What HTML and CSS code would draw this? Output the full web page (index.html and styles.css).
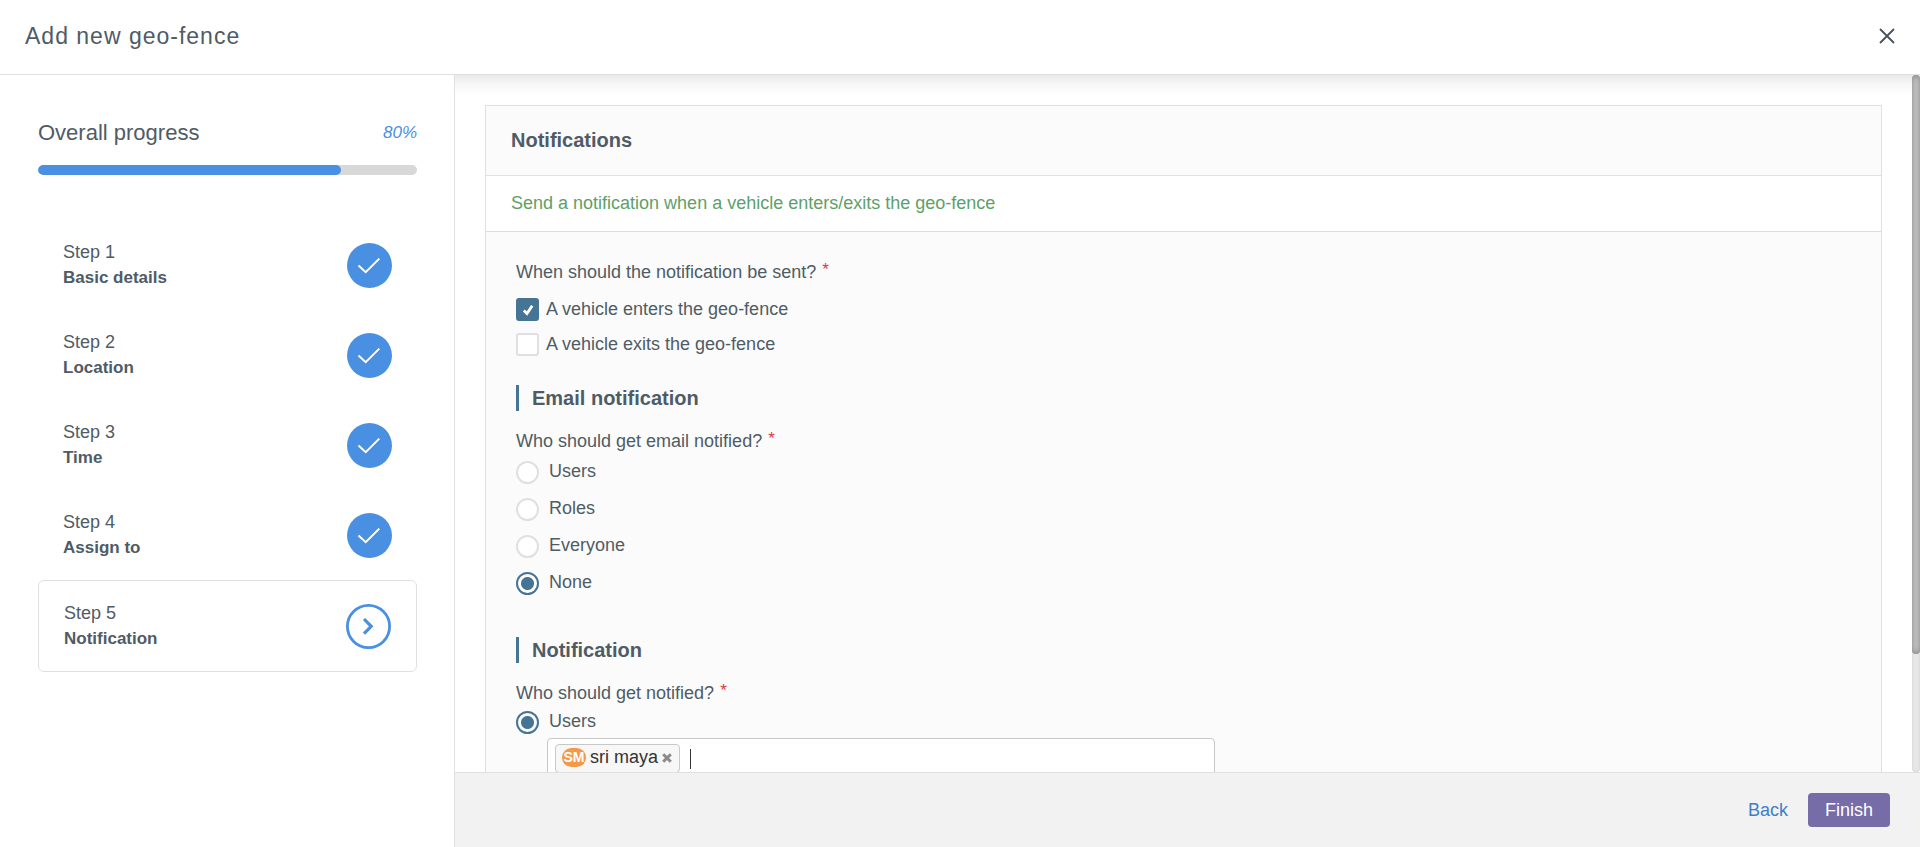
FILE: index.html
```html
<!DOCTYPE html>
<html lang="en">
<head>
<meta charset="utf-8">
<meta name="viewport" content="width=device-width, initial-scale=1">
<title>Add new geo-fence</title>
<link rel="stylesheet" href="styles.css">
</head>
<body>
<div class="dialog">
  <header class="dialog-header">
    <h1 class="dialog-title">Add new geo-fence</h1>
    <button class="close" type="button" aria-label="Close">
      <svg viewBox="0 0 16 16" width="16" height="16"><path d="M1 1 15 15M15 1 1 15" fill="none" stroke="currentColor" stroke-width="1.8"/></svg>
    </button>
  </header>

  <div class="dialog-body">
    <aside class="sidebar">
      <div class="progress-head">
        <h2 class="progress-title">Overall progress</h2>
        <span class="progress-value">80%</span>
      </div>
      <div class="progress-track"><div class="progress-fill" style="width: 80%"></div></div>
      <ol class="steps">
        <li class="step">
          <div><div>Step 1</div><strong>Basic details</strong></div>
          <svg class="step-icon" viewBox="0 0 45 45"><circle cx="22.5" cy="22.5" r="22.5" fill="#4a90e2"/><path d="M11.5 22.5 18.7 29.2 32.3 15.6" fill="none" stroke="#fff" stroke-width="2"/></svg>
        </li>
        <li class="step">
          <div><div>Step 2</div><strong>Location</strong></div>
          <svg class="step-icon" viewBox="0 0 45 45"><circle cx="22.5" cy="22.5" r="22.5" fill="#4a90e2"/><path d="M11.5 22.5 18.7 29.2 32.3 15.6" fill="none" stroke="#fff" stroke-width="2"/></svg>
        </li>
        <li class="step">
          <div><div>Step 3</div><strong>Time</strong></div>
          <svg class="step-icon" viewBox="0 0 45 45"><circle cx="22.5" cy="22.5" r="22.5" fill="#4a90e2"/><path d="M11.5 22.5 18.7 29.2 32.3 15.6" fill="none" stroke="#fff" stroke-width="2"/></svg>
        </li>
        <li class="step">
          <div><div>Step 4</div><strong>Assign to</strong></div>
          <svg class="step-icon" viewBox="0 0 45 45"><circle cx="22.5" cy="22.5" r="22.5" fill="#4a90e2"/><path d="M11.5 22.5 18.7 29.2 32.3 15.6" fill="none" stroke="#fff" stroke-width="2"/></svg>
        </li>
        <li class="step step-current" aria-current="step">
          <div><div>Step 5</div><strong>Notification</strong></div>
          <svg class="step-icon" viewBox="0 0 45 45"><circle cx="22.5" cy="22.5" r="21.1" fill="#fff" stroke="#4a90e2" stroke-width="2.8"/><path d="M18 15 25.2 22.3 18 29.6" fill="none" stroke="#4a90e2" stroke-width="3.2"/></svg>
        </li>
      </ol>
    </aside>

    <div class="main">
      <div class="scroll-area">
        <main class="content">
          <section class="card">
            <h2 class="card-title">Notifications</h2>
            <p class="card-hint">Send a notification when a vehicle enters/exits the geo-fence</p>
            <form class="card-body">
              <fieldset class="group">
                <legend class="question">When should the notification be sent?<span class="required">*</span></legend>
                <div class="checks">
                  <label class="check-row">
                    <span class="box-wrap">
                      <input class="checkbox" type="checkbox" checked>
                      <svg class="tick" viewBox="0 0 12 12"><path d="M1.8 6.6 5 9.6 10.2 1.8" fill="none" stroke="#fff" stroke-width="2.8"/></svg>
                    </span>
                    A vehicle enters the geo-fence
                  </label>
                  <label class="check-row">
                    <span class="box-wrap"><input class="checkbox" type="checkbox"></span>
                    A vehicle exits the geo-fence
                  </label>
                </div>
              </fieldset>

              <h3 class="section-title">Email notification</h3>
              <fieldset class="group">
                <legend class="question">Who should get email notified?<span class="required">*</span></legend>
                <div class="radios">
                  <label class="radio-row"><input class="radio" type="radio" name="email"><span class="radio-text">Users</span></label>
                  <label class="radio-row"><input class="radio" type="radio" name="email"><span class="radio-text">Roles</span></label>
                  <label class="radio-row"><input class="radio" type="radio" name="email"><span class="radio-text">Everyone</span></label>
                  <label class="radio-row"><input class="radio" type="radio" name="email" checked><span class="radio-text">None</span></label>
                </div>
              </fieldset>

              <h3 class="section-title section-later">Notification</h3>
              <fieldset class="group">
                <legend class="question">Who should get notified?<span class="required">*</span></legend>
                <label class="radio-row"><input class="radio" type="radio" name="notify" checked><span class="radio-text">Users</span></label>
                <div class="picker">
                  <span class="chip">
                    <span class="avatar">SM</span>
                    <span>sri maya</span>
                    <button class="chip-remove" type="button" aria-label="Remove sri maya">
                      <svg viewBox="0 0 10 10" width="10" height="10"><path d="M1.2 1.2 8.8 8.8M8.8 1.2 1.2 8.8" stroke="#8b8b8b" stroke-width="3"/></svg>
                    </button>
                  </span>
                  <span class="caret"></span>
                  <input class="picker-input" type="text" aria-label="Users to notify">
                </div>
              </fieldset>
            </form>
          </section>
        </main>
        <div class="scrollbar"><div class="scroll-thumb"></div></div>
      </div>
      <footer class="actions">
        <a class="back" href="#">Back</a>
        <button class="finish" type="button">Finish</button>
      </footer>
    </div>
  </div>
</div>
</body>
</html>
```

FILE: styles.css
```css
* {
  box-sizing: border-box;
}

body {
  margin: 0;
  font-family: "Liberation Sans", Arial, sans-serif;
  font-size: 18px;
  line-height: 25px;
  color: #4f5b65;
  background: #fff;
}

h1, h2, h3, p, ol, fieldset, legend {
  margin: 0;
  padding: 0;
}

button, input {
  font: inherit;
}

.dialog {
  display: flex;
  flex-direction: column;
  height: 100vh;
  overflow: hidden;
}

.dialog-header {
  display: flex;
  align-items: center;
  justify-content: space-between;
  padding: 21px 25px 23px;
  border-bottom: 1px solid #e0e0e0;
}

.dialog-title {
  font-size: 23px;
  font-weight: 400;
  line-height: 30px;
  letter-spacing: 1px;
}

.close {
  display: flex;
  padding: 0;
  border: 0;
  background: none;
  color: #46525d;
}

.dialog-body {
  display: flex;
  flex: 1;
  min-height: 0;
}

.sidebar {
  flex: 0 0 455px;
  padding: 42px 37px 0 38px;
  border-right: 1px solid #e0e0e0;
}

.progress-head {
  display: flex;
  align-items: center;
  justify-content: space-between;
}

.progress-title {
  font-size: 22px;
  font-weight: 400;
  line-height: 31px;
}

.progress-value {
  color: #4a90e2;
  font-size: 17px;
  font-style: italic;
}

.progress-track {
  height: 10px;
  margin-top: 17px;
  border-radius: 5px;
  background: #d8d8d8;
  overflow: hidden;
}

.progress-fill {
  height: 100%;
  border-radius: 5px;
  background: #4a90e2;
}

.steps {
  margin-top: 45px;
  list-style: none;
}

.step {
  display: flex;
  align-items: center;
  justify-content: space-between;
  padding: 20px 25px;
}

.step-current {
  border: 1px solid #e0e0e0;
  border-radius: 6px;
}

.step strong {
  display: block;
  font-size: 17px;
}

.step-icon {
  width: 45px;
  height: 45px;
}

.main {
  display: flex;
  flex: 1;
  flex-direction: column;
  min-width: 0;
}

.scroll-area {
  display: flex;
  flex: 1;
  min-height: 0;
  background: linear-gradient(#e9e9e9, #f7f7f7 9px, #fff 20px);
}

.content {
  flex: 1;
  padding: 30px;
  overflow: hidden;
}

.card {
  border: 1px solid #e0e0e0;
  background: #fbfbfb;
}

.card-title {
  padding: 22px 25px;
  border-bottom: 1px solid #e0e0e0;
  font-size: 20px;
}

.card-hint {
  padding: 15px 25px;
  border-bottom: 1px solid #dcdcdc;
  background: #fff;
  color: #5da168;
}

.card-body {
  padding: 28px 30px 40px;
}

.group {
  border: 0;
}

.required {
  margin-left: 6px;
  color: #e0373f;
  font-size: 17px;
  vertical-align: 3px;
  line-height: 1;
}

.checks {
  padding-top: 7px;
}

.check-row {
  display: flex;
  align-items: center;
  gap: 7px;
  height: 35px;
}

.box-wrap {
  display: grid;
  place-items: center;
}

.checkbox,
.tick {
  grid-area: 1 / 1;
}

.checkbox {
  appearance: none;
  width: 23px;
  height: 23px;
  margin: 0;
  border: 2px solid #e0e0e0;
  border-radius: 3px;
  background: #fff;
}

.checkbox:checked {
  border-color: #467495;
  background: #467495;
}

.tick {
  width: 12px;
  height: 12px;
  pointer-events: none;
}

.section-title {
  margin: 23px 0 18px;
  padding-left: 13px;
  border-left: 3px solid #467495;
  font-size: 20px;
  line-height: 26px;
}

.section-later {
  margin-top: 38px;
}

.radios {
  display: grid;
  gap: 5px;
  padding-top: 2px;
}

.radio-row {
  display: flex;
  align-items: center;
  gap: 10px;
  height: 32px;
}

.radio-text {
  padding-bottom: 2px;
}

.radio {
  appearance: none;
  width: 23px;
  height: 23px;
  margin: 0;
  border: 2px solid #e0e0e0;
  border-radius: 50%;
  background: #fff;
}

.radio:checked {
  border-color: #467495;
  background: radial-gradient(circle, #467495 6px, #fff 7px);
}

.picker {
  display: flex;
  align-items: center;
  width: 50%;
  margin-left: 31px;
  padding: 5px 7px;
  border: 1px solid #c8c8c8;
  border-radius: 4px;
  background: #fff;
}

.chip {
  display: flex;
  align-items: center;
  gap: 4px;
  padding: 0 7px 2px 6px;
  border: 1px solid #c8c8c8;
  border-radius: 4px;
  background: #f7f7f7;
  color: #333;
  white-space: nowrap;
}

.avatar {
  width: 24px;
  border-radius: 10px;
  background: #f2994a;
  color: #fff;
  font-size: 14px;
  font-weight: 700;
  line-height: 19px;
  text-align: center;
}

.chip-remove {
  display: flex;
  padding: 0;
  border: 0;
  background: none;
}

.caret {
  width: 1px;
  height: 20px;
  margin-left: 10px;
  background: #333;
}

.picker-input {
  flex: 1;
  min-width: 0;
  height: 20px;
  padding: 0;
  border: 0;
  outline: 0;
  background: none;
}

.scrollbar {
  flex: 0 0 8px;
  border-radius: 5px;
  background: #e8e8e8;
  box-shadow: inset 0 0 3px #ccc;
}

.scroll-thumb {
  height: 83%;
  border-radius: 5px;
  background: #cdcdcd;
  box-shadow: inset 0 0 6px #777;
}

.actions {
  display: flex;
  align-items: center;
  justify-content: flex-end;
  gap: 20px;
  padding: 20px 30px;
  border-top: 1px solid #e0e0e0;
  background: #f2f2f2;
}

.back {
  color: #3f80c4;
  text-decoration: none;
}

.finish {
  height: 34px;
  padding: 0 17px;
  border: 0;
  border-radius: 4px;
  background: #756ca8;
  color: #fff;
}
```
